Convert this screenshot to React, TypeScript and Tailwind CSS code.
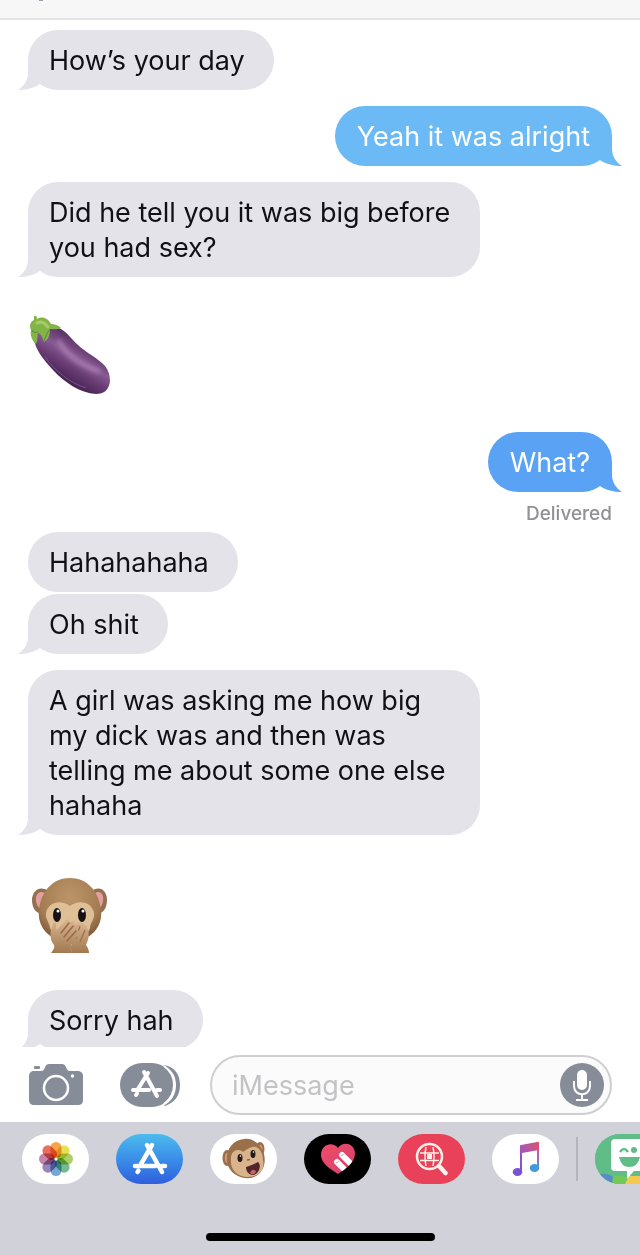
import { useState, type ReactNode } from 'react';
import clsx from 'clsx';

type Message = {
  id: number;
  from: 'them' | 'me';
  text?: string;
  emoji?: 'eggplant' | 'monkey';
  tone?: 'light' | 'deep';
  tail?: boolean;
  status?: string;
};

const MESSAGES: Message[] = [
  { id: 1, from: 'them', text: 'How’s your day', tail: true },
  { id: 2, from: 'me', text: 'Yeah it was alright', tone: 'light', tail: true },
  { id: 3, from: 'them', text: 'Did he tell you it was big before you had sex?', tail: true },
  { id: 4, from: 'them', emoji: 'eggplant' },
  { id: 5, from: 'me', text: 'What?', tone: 'deep', tail: true, status: 'Delivered' },
  { id: 6, from: 'them', text: 'Hahahahaha' },
  { id: 7, from: 'them', text: 'Oh shit', tail: true },
  {
    id: 8,
    from: 'them',
    text: 'A girl was asking me how big my dick was and then was telling me about some one else hahaha',
    tail: true,
  },
  { id: 9, from: 'them', emoji: 'monkey' },
  { id: 10, from: 'them', text: 'Sorry hah', tail: true },
];

function Eggplant() {
  return (
    <svg role="img" aria-label="Eggplant" width="84" height="80" viewBox="0 0 84 80">
      <defs>
        <linearGradient id="egg" gradientUnits="userSpaceOnUse" x1="56" y1="30" x2="34" y2="66">
          <stop offset="0" stopColor="#5d3468" />
          <stop offset="0.35" stopColor="#885993" />
          <stop offset="0.6" stopColor="#6b3e76" />
          <stop offset="1" stopColor="#40204f" />
        </linearGradient>
        <filter id="eggSoft" x="-30%" y="-30%" width="160%" height="160%">
          <feGaussianBlur stdDeviation="2" />
        </filter>
      </defs>
      <path
        d="M6 24C10 14 22 10 33 14C40 18 44 25 50 30C56 36 66 41 74 48C80 53 82 60 82 66C81 75 76 79 68 79C52 78 36 67 25 55C15 44 7 34 6 24Z"
        fill="url(#egg)"
      />
      <path d="M31 27C39 40 53 50 70 56" stroke="#a679af" strokeWidth="5" fill="none" filter="url(#eggSoft)" strokeLinecap="round" />
      <path d="M17 42C27 56 42 68 58 73" stroke="#80528b" strokeWidth="1" fill="none" />
      <path
        d="M6 1C8 0 9 1 9 4C14 1 20 3 23 9C27 9 30 10 33 13C29 15 25 14 22 14C22 19 21 24 16 27C14 21 12 18 10 18C9 22 10 26 8 29C4 26 2 20 3 15C1 11 2 7 6 5Z"
        fill="#82b448"
      />
      <path d="M9 8C13 6 17 8 20 12" stroke="#a4cd67" strokeWidth="3" fill="none" strokeLinecap="round" />
      <path d="M4 15C6 19 8 17 10 17M16 26C18 21 19 18 22 14" stroke="#588635" strokeWidth="1" fill="none" />
    </svg>
  );
}

function MonkeyHandsOverMouth() {
  return (
    <svg role="img" aria-label="Speak-no-evil monkey" width="84" height="80" viewBox="0 0 84 80">
      <defs>
        <radialGradient id="fur" cx="0.5" cy="0.3" r="0.7">
          <stop offset="0" stopColor="#bb9569" />
          <stop offset="0.7" stopColor="#a57c52" />
          <stop offset="1" stopColor="#7d5a39" />
        </radialGradient>
        <linearGradient id="paw" x1="0" y1="0" x2="0" y2="1">
          <stop offset="0" stopColor="#dab692" />
          <stop offset="1" stopColor="#a1784f" />
        </linearGradient>
      </defs>
      <path d="M20 18C12 12 4 18 4 27C4 36 9 42 17 41Z" fill="#94704e" />
      <path d="M17 20C11 17 7 22 8 28C9 34 12 37 17 38Z" fill="#e49da0" />
      <path d="M64 18C72 12 79 18 79 27C79 36 74 42 67 41Z" fill="#94704e" />
      <path d="M67 20C73 17 76 22 75 28C74 34 71 37 67 38Z" fill="#e49da0" />
      <path d="M42 5C25 5 13 18 11 37C9 54 21 68 42 69C63 68 75 54 73 37C71 18 59 5 42 5Z" fill="url(#fur)" />
      <path
        d="M42 33C33 26 20 29 18 40C17 46 22 50 22 55C25 64 33 67 42 67C51 67 59 64 62 55C62 50 67 46 66 40C64 29 51 26 42 33Z"
        fill="#dfbf96"
      />
      <ellipse cx="29" cy="42" rx="4" ry="7" fill="#171315" />
      <ellipse cx="54" cy="42" rx="4" ry="7" fill="#171315" />
      <circle cx="30" cy="38" r="1.5" fill="#fff" />
      <circle cx="55" cy="38" r="1.5" fill="#fff" />
      <path d="M44 80L43 67L46 52C49 47 54 49 58 53C63 60 60 68 58 72C60 75 61 77 61 80Z" fill="url(#paw)" />
      <path d="M52 53L48 66M57 57L52 69" stroke="#9c704f" strokeWidth="1.3" />
      <path
        d="M23 80C25 77 27 75 26 72C21 66 22 59 25 51C26 48 29 49 28 54L29 57L38 47C41 45 43 47 41 50C46 46 49 49 45 53C50 50 53 53 48 58C53 56 53 60 49 64L43 72C41 75 43 77 43 80Z"
        fill="url(#paw)"
      />
      <path d="M41 50L33 60M45 53L36 64M48 58L39 68M43 73V80" stroke="#99694a" strokeWidth="1.5" strokeLinecap="round" />
    </svg>
  );
}

function Tail({ side, tone }: { side: 'left' | 'right'; tone: string }) {
  return (
    <svg
      aria-hidden="true"
      width="26"
      height="30"
      viewBox="0 0 26 30"
      className={clsx('absolute bottom-0', tone, side === 'left' ? '-left-[10px]' : '-right-[10px] -scale-x-100')}
    >
      <path d="M10 0V13C10 20 6 26 0 30C8 30 16 28 22 24L26 20V0Z" fill="currentColor" />
    </svg>
  );
}

function Bubble({ message }: { message: Message }) {
  const mine = message.from === 'me';
  const tailTone = !mine ? 'text-[#e4e3e9]' : message.tone === 'light' ? 'text-[#6bb9f5]' : 'text-[#5aa3f4]';

  return (
    <div
      className={clsx(
        'relative max-w-[452px] rounded-[30px] pt-[13px] pb-3 text-[27px] leading-[35px]',
        mine ? 'px-[22px] text-white' : 'bg-[#e4e3e9] pr-[29px] pl-[21px] text-[#111115]',
        mine && (message.tone === 'light' ? 'bg-[#6bb9f5]' : 'bg-[#5aa3f4]'),
      )}
    >
      {message.tail && <Tail side={mine ? 'right' : 'left'} tone={tailTone} />}
      <p className="relative">{message.text}</p>
    </div>
  );
}

function AppStoreMark() {
  return (
    <svg aria-hidden="true" width="36" height="36" viewBox="0 0 36 36" fill="none" stroke="#fff" strokeWidth="4.500" strokeLinecap="round">
      <path d="M20 4L9 23M5.500 31L6.500 29.500M15 4L30 31M3 25H23M30 25H33" />
    </svg>
  );
}

function CameraIcon() {
  return (
    <svg aria-hidden="true" width="56" height="42" viewBox="0 0 56 42">
      <path
        d="M6 7H13C15 7 16 6 17 3C18 1 19 0 21 0H34C36 0 37 1 38 3C39 6 40 7 42 7H49C53 7 55 9 55 12V36C55 40 53 41 49 41H6C3 41 1 39 1 36V12C1 9 3 7 6 7Z"
        fill="#878d98"
      />
      <rect x="6" y="2" width="6" height="3" rx="1" fill="#878d98" />
      <circle cx="28" cy="24" r="12" fill="none" stroke="#fff" strokeWidth="2.500" />
      <circle cx="44.500" cy="12" r="1.700" fill="#fff" />
    </svg>
  );
}

function AppsIcon() {
  return (
    <svg aria-hidden="true" width="60" height="44" viewBox="0 0 60 44">
      <path d="M43 2C55 3 60 12 60 22S55 41 43 43C51 39 56 32 56 22S51 6 43 2Z" fill="#878d98" />
      <rect width="54" height="44" rx="22" fill="#878d98" />
      <g fill="none" stroke="#fff" strokeWidth="4" strokeLinecap="round">
        <path d="M28 10L18 26M16 32L17 30.500M24 9L37 33M13 27H29M37 27H40" />
      </g>
      <path d="M44 3C51 8 54 14 54 22S51 36 44 41" stroke="#fff" strokeWidth="2" fill="none" />
    </svg>
  );
}

const PETALS = [
  { angle: 0, color: '#f59a32' },
  { angle: 45, color: '#e6dc45' },
  { angle: 90, color: '#a4c957' },
  { angle: 135, color: '#67b484' },
  { angle: 180, color: '#679fd0' },
  { angle: 225, color: '#8c78b5' },
  { angle: 270, color: '#bf789f' },
  { angle: 315, color: '#e75e4b' },
];

function PhotosIcon() {
  return (
    <svg aria-hidden="true" width="36" height="36" viewBox="0 0 36 36">
      {PETALS.map((petal) => (
        <rect
          key={petal.angle}
          x="12.500"
          y="1"
          width="11"
          height="16"
          rx="5.500"
          fill={petal.color}
          fillOpacity="0.9"
          transform={`rotate(${petal.angle} 18 18)`}
          className="mix-blend-multiply"
        />
      ))}
      <circle cx="18" cy="18" r="1.500" fill="#fff" />
    </svg>
  );
}

function AnimojiIcon() {
  return (
    <svg aria-hidden="true" width="44" height="42" viewBox="0 0 44 42">
      <ellipse cx="5" cy="20" rx="4.500" ry="8" fill="#9b704f" />
      <ellipse cx="5.500" cy="20" rx="2.500" ry="5" fill="#daa180" />
      <ellipse cx="38" cy="11" rx="4.500" ry="7" fill="#9b704f" />
      <ellipse cx="38" cy="12" rx="2.500" ry="5" fill="#daa180" />
      <path d="M22 1C10 2 3 13 5 25C8 36 18 41 29 40C42 37 46 22 40 11C36 4 29 0 22 1Z" fill="#9a704a" />
      <path d="M21 14C15 9 8 14 9 22C8 31 15 39 26 39C37 39 43 31 41 22C41 14 36 7 30 9C26 10 24 12 21 14Z" fill="#d8b38b" />
      <ellipse cx="18" cy="20" rx="2.500" ry="4" fill="#241a1a" />
      <ellipse cx="31" cy="16" rx="2.500" ry="4" fill="#241a1a" />
      <circle cx="18.500" cy="18" r="0.800" fill="#fff" />
      <circle cx="31.500" cy="14" r="0.800" fill="#fff" />
      <path d="M25 22L28 21.500" stroke="#8d6247" strokeWidth="1.500" />
      <path d="M24 29C28 28 32 26 36 24C40 27 37 37 30 37C26 36 24 33 24 29Z" fill="#54242a" />
      <path d="M28 35C29 31 34 31 34 34C32 37 30 37 28 35Z" fill="#bd6670" />
    </svg>
  );
}

function HeartTouchIcon() {
  return (
    <svg aria-hidden="true" width="36" height="34" viewBox="0 0 36 34">
      <defs>
        <linearGradient id="heart" x1="0" y1="0" x2="1" y2="1">
          <stop offset="0" stopColor="#f34c65" />
          <stop offset="1" stopColor="#cf426f" />
        </linearGradient>
        <clipPath id="heartClip">
          <path d="M18 6C13 -1 1 2 1 13C1 21 10 27 18 32C27 26 35 20 35 11C34 1 23 -1 18 6Z" />
        </clipPath>
      </defs>
      <g clipPath="url(#heartClip)">
        <rect width="36" height="34" fill="url(#heart)" />
        <path d="M22 13L33 24M17 20L28 31" stroke="#fff" strokeWidth="6" strokeLinecap="round" />
        <path d="M21 14L24 12M16 21L19 19" stroke="#edb6c5" strokeWidth="1.500" />
      </g>
    </svg>
  );
}

function ImageSearchIcon() {
  return (
    <svg aria-hidden="true" width="34" height="34" viewBox="0 0 34 34" fill="none" stroke="#fff0e9">
      <circle cx="14.500" cy="14.500" r="12.500" strokeWidth="2.500" />
      <path d="M24 24L30.500 31" strokeWidth="4.500" strokeLinecap="round" />
      <path d="M5 11H24M5 18.500H24M11 5Q9 14.500 11 24M18 5Q20 14.500 18 24" strokeWidth="1.500" />
      <rect x="12" y="12" width="5" height="5" fill="#fff0e9" stroke="none" />
    </svg>
  );
}

function MusicIcon() {
  return (
    <svg aria-hidden="true" width="28" height="36" viewBox="0 0 28 36">
      <defs>
        <linearGradient id="music" x1="0" y1="1" x2="1" y2="0">
          <stop offset="0" stopColor="#7850d8" />
          <stop offset="0.5" stopColor="#b056af" />
          <stop offset="1" stopColor="#dd5266" />
        </linearGradient>
        <linearGradient id="musicStem" x1="0" y1="0" x2="0" y2="1">
          <stop offset="0" stopColor="#dc5367" />
          <stop offset="0.6" stopColor="#a568bd" />
          <stop offset="1" stopColor="#389cdb" />
        </linearGradient>
      </defs>
      <path d="M8 5Q8 4 9 4L25 1Q27 0 27 2V9L10 12V30H8Z" fill="url(#music)" />
      <path d="M25 5H27V26H25Z" fill="url(#musicStem)" />
      <ellipse cx="5.500" cy="31" rx="4.800" ry="4" fill="#7953d5" />
      <ellipse cx="22.500" cy="27" rx="4.800" ry="4" fill="#439cd9" />
    </svg>
  );
}

function BitmojiIcon() {
  return (
    <svg aria-hidden="true" width="67" height="50" viewBox="0 0 67 50">
      <rect width="67" height="50" fill="#61bd87" />
      <path d="M4 40Q14 39 19 44L17 50H4Z" fill="#568cc8" />
      <path d="M18 43Q25 39 32 44L30 50H17Z" fill="#72c957" />
      <path d="M34 42H60L55 50H30Z" fill="#f4c94f" />
      <path d="M20 5H50Q54 5 54 9V33Q54 37 50 37H39L32 45V37H20Q16 37 16 33V10Q16 5 20 5Z" fill="#fff" />
      <path d="M24 23H45Q43 33 34 33Q26 33 24 23Z" fill="#61bd87" />
      <path d="M25 18Q29 12 33 18" stroke="#61bd87" strokeWidth="2.500" fill="none" />
      <circle cx="39" cy="16" r="3" fill="#61bd87" />
    </svg>
  );
}

function DrawerApp({ label, className, children }: { label: string; className: string; children: ReactNode }) {
  return (
    <button
      type="button"
      aria-label={label}
      className={clsx('flex h-[50px] w-[67px] shrink-0 items-center justify-center overflow-hidden rounded-full', className)}
    >
      {children}
    </button>
  );
}

export default function App() {
  const [draft, setDraft] = useState('');

  return (
    <div className="flex min-h-screen flex-col overflow-x-hidden bg-white font-[Inter,'Liberation_Sans',sans-serif]">
      {/* Bottom edge of the navigation bar */}
      <header className="h-5 border-b-2 border-[#e3e3e4] bg-[#f7f7f7] pl-[39px]">
        <div className="h-px w-1 bg-gray-400" />
      </header>

      {/* Conversation */}
      <main className="flex grow flex-col px-7 pt-[10px]">
        {MESSAGES.map((message, index) => {
          const previous = MESSAGES[index - 1];
          const grouped = previous?.from === 'them' && previous.text && !previous.tail;
          const afterStatus = previous?.status;

          return (
            <div
              key={message.id}
              className={clsx(
                'flex flex-col',
                message.from === 'me' ? 'items-end' : 'items-start',
                index > 0 && (grouped ? 'mt-[2px]' : afterStatus ? 'mt-2' : 'mt-4'),
              )}
            >
              {message.text && <Bubble message={message} />}
              {message.emoji && (
                <div className="pt-[22px] pb-[21px]">
                  {message.emoji === 'eggplant' ? <Eggplant /> : <MonkeyHandsOverMouth />}
                </div>
              )}
              {message.status && (
                <span className="mt-3 text-[19px] leading-5 font-medium text-[#919195]">{message.status}</span>
              )}
            </div>
          );
        })}
      </main>

      {/* Compose bar, covers the end of the last bubble */}
      <form
        className="relative -mt-[3px] flex items-center bg-white px-7 pt-2 pb-[7px]"
        onSubmit={(e) => {
          e.preventDefault();
          setDraft('');
        }}
      >
        <button type="button" aria-label="Camera">
          <CameraIcon />
        </button>
        <button type="button" aria-label="Apps" className="ml-9">
          <AppsIcon />
        </button>
        <div className="ml-[30px] flex h-[60px] min-w-0 grow items-center rounded-full border-2 border-[#cfcfd1] bg-[#fbfbfb] pr-[6px] pl-5">
          <input
            type="text"
            aria-label="iMessage"
            placeholder="iMessage"
            value={draft}
            onChange={(e) => setDraft(e.target.value)}
            className="min-w-0 grow bg-transparent text-[27px] leading-[35px] outline-none placeholder:text-[#c3c3c6]"
          />
          <button type="button" aria-label="Dictate" className="shrink-0">
            <svg aria-hidden="true" width="44" height="44" viewBox="0 0 44 44">
              <circle cx="22" cy="22" r="22" fill="#878d98" />
              <rect x="17" y="7" width="10" height="20" rx="5" fill="#fff" />
              <path d="M14 18V23C14 34 30 34 30 23V18M22 31V37M16 37H28" stroke="#fff" strokeWidth="2" fill="none" />
            </svg>
          </button>
        </div>
      </form>

      {/* App drawer */}
      <footer className="bg-[#d1d2d9] pb-[14px]">
        <nav aria-label="iMessage apps" className="flex items-center gap-[27px] overflow-hidden pt-3 pl-[22px]">
          <DrawerApp label="Photos" className="bg-white">
            <PhotosIcon />
          </DrawerApp>
          <DrawerApp label="App Store" className="bg-linear-to-b from-[#4dbbee] to-[#315edf]">
            <AppStoreMark />
          </DrawerApp>
          <DrawerApp label="Animoji" className="bg-white">
            <AnimojiIcon />
          </DrawerApp>
          <DrawerApp label="Digital Touch" className="bg-black">
            <HeartTouchIcon />
          </DrawerApp>
          <DrawerApp label="Images" className="bg-[#e94159]">
            <ImageSearchIcon />
          </DrawerApp>
          <DrawerApp label="Music" className="bg-white">
            <MusicIcon />
          </DrawerApp>
          <div className="-mx-[10px] h-11 w-[2px] shrink-0 bg-[#b4b5bb]" />
          <DrawerApp label="Bitmoji" className="bg-[#61bd87]">
            <BitmojiIcon />
          </DrawerApp>
        </nav>
        <div className="mx-auto mt-[49px] h-2 w-[229px] rounded-full bg-black" />
      </footer>
    </div>
  );
}
